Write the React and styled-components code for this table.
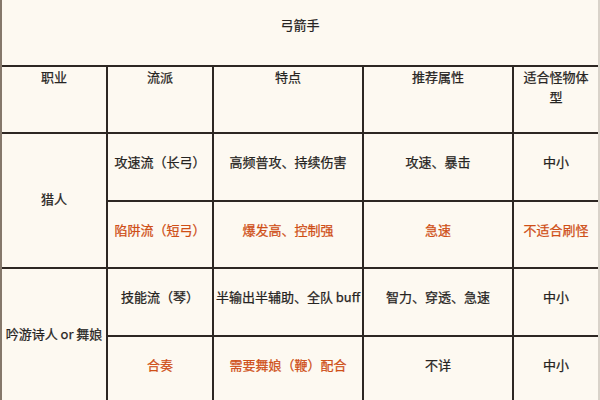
import React from "react";
import styled, { createGlobalStyle } from "styled-components";

const Global = createGlobalStyle`
  html, body { margin: 0; padding: 0; background: #fdf9f1; overflow: hidden; }
  body { font-family: "Noto Sans CJK SC", "Noto Sans", sans-serif; }
`;

const Frame = styled.div`
  width: 600px;
  height: 400px;
  box-sizing: border-box;
  border-left: 2px solid #85786b;
  border-right: 2px solid #d9d3ca;
  overflow: hidden;
`;

const Grid = styled.div`
  display: grid;
  grid-template-columns: 104px 104px 148px 148px 84px;
  grid-template-rows: 65px 65px 66px 65px 66px 66px;
  gap: 2px;
  background: #2d2723;
`;

const Cell = styled.div`
  background: #fdf9f1;
  color: ${(p) => (p.$accent ? "#cf4f17" : "#262422")};
  font-size: 13px;
  line-height: 20px;
  text-align: center;
  -webkit-text-stroke: 0.25px currentColor;
  padding: ${(p) => (p.$head ? "0 5px" : `0 5px ${p.$lift ?? 10}px`)};
  display: flex;
  align-items: ${(p) => (p.$head ? "flex-start" : "center")};
  justify-content: center;
  grid-row: ${(p) => (p.$span ? `span ${p.$span}` : "auto")};
  white-space: ${(p) => (p.$nowrap ? "nowrap" : "normal")};
`;

const Title = styled.div`
  grid-column: 1 / -1;
  background: #fdf9f1;
  color: #262422;
  font-size: 13px;
  line-height: 20px;
  text-align: center;
  -webkit-text-stroke: 0.25px currentColor;
  padding-top: 15px;
`;

const headers = ["职业", "流派", "特点", "推荐属性", "适合怪物体型"];

export default function App() {
  return (
    <>
      <Global />
      <Frame>
        <Grid>
          <Title>弓箭手</Title>
          {headers.map((h) => (
            <Cell key={h} $head>
              {h}
            </Cell>
          ))}
          <Cell $span={2} $lift={4}>猎人</Cell>
          <Cell>攻速流（长弓）</Cell>
          <Cell>高频普攻、持续伤害</Cell>
          <Cell>攻速、暴击</Cell>
          <Cell>中小</Cell>
          <Cell $accent>陷阱流（短弓）</Cell>
          <Cell $accent>爆发高、控制强</Cell>
          <Cell $accent>急速</Cell>
          <Cell $accent $nowrap>不适合刷怪</Cell>
          <Cell $span={2} $lift={4} $nowrap>吟游诗人 or 舞娘</Cell>
          <Cell>技能流（琴）</Cell>
          <Cell $nowrap>半输出半辅助、全队 buff</Cell>
          <Cell>智力、穿透、急速</Cell>
          <Cell>中小</Cell>
          <Cell $accent>合奏</Cell>
          <Cell $accent>需要舞娘（鞭）配合</Cell>
          <Cell>不详</Cell>
          <Cell>中小</Cell>
        </Grid>
      </Frame>
    </>
  );
}
